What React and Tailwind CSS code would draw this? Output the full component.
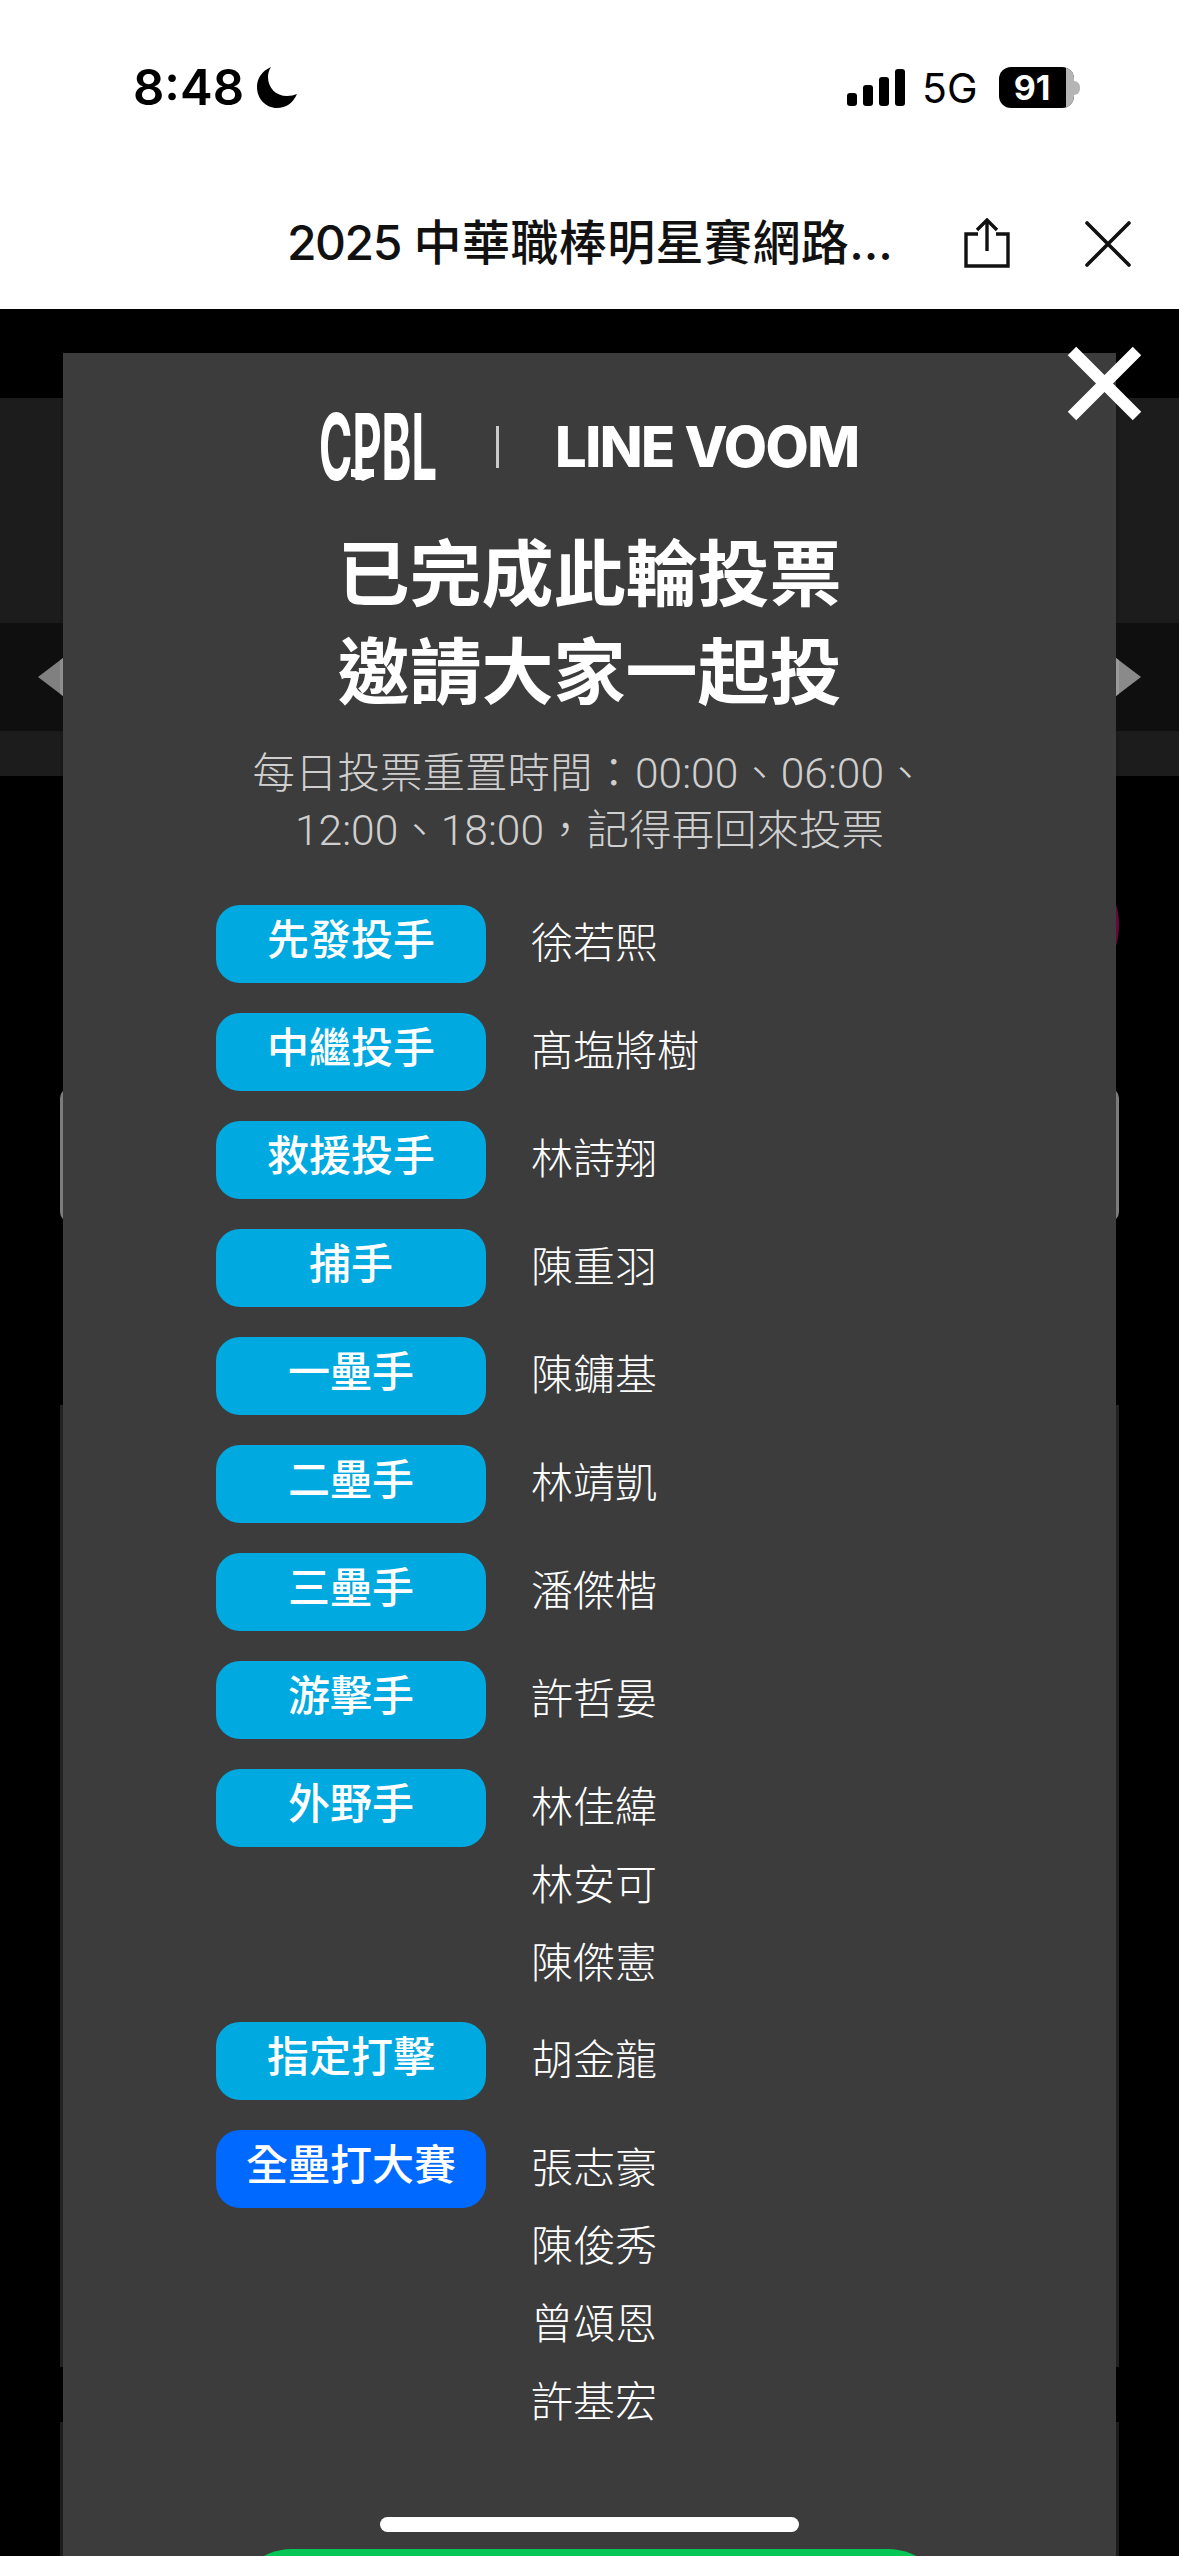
const CJK = "font-['Roboto','Noto_Sans_CJK_TC',sans-serif]";

const rows = [
  ["先發投手", ["徐若熙"]],
  ["中繼投手", ["髙塩將樹"]],
  ["救援投手", ["林詩翔"]],
  ["捕手", ["陳重羽"]],
  ["一壘手", ["陳鏞基"]],
  ["二壘手", ["林靖凱"]],
  ["三壘手", ["潘傑楷"]],
  ["游擊手", ["許哲晏"]],
  ["外野手", ["林佳緯", "林安可", "陳傑憲"]],
  ["指定打擊", ["胡金龍"]],
  ["全壘打大賽", ["張志豪", "陳俊秀", "曾頌恩", "許基宏"]],
];

function StatusBar() {
  return (
    <div className="h-[130px] flex items-start pt-[68px] pl-[133px] font-['Inter',sans-serif] text-black">
      <div className="w-[113px] text-[49px] leading-[40px] font-semibold">8:48</div>
      <svg className="ml-[11px] -mt-[1px] w-[40px] h-[41px]" viewBox="0 0 40 41">
        <path d="M14 0 C5 4 0 11 0 20 C0 32 9 41 20 41 C29 41 36 36 40 27 C37 28 34 29 30 29 C19 29 11 21 11 10 C11 6 12 3 14 0 Z" fill="#000" />
      </svg>
      <svg className="ml-[550px] mt-[1px] w-[58px] h-[37px]" viewBox="0 0 58 37">
        <rect x="0" y="24" width="10" height="13" rx="3" fill="#000" />
        <rect x="16" y="16" width="10" height="21" rx="3" fill="#000" />
        <rect x="32" y="8" width="10" height="29" rx="3" fill="#000" />
        <rect x="48" y="0" width="10" height="37" rx="3" fill="#000" />
      </svg>
      <div className="ml-[17px] text-[41px] leading-[40px] font-normal">5G</div>
      <div className="ml-[21px] -mt-[1px] flex items-center">
        <div className="w-[75px] h-[41px] rounded-[12px] bg-black flex overflow-hidden">
          <div className="w-[67px] text-center text-white text-[34px] leading-[41px] font-bold">91</div>
          <div className="w-[8px] bg-[#b5b5b5]" />
        </div>
        <div className="w-[6px] h-[14px] rounded-r-full bg-[#b5b5b5]" />
      </div>
    </div>
  );
}

function TitleBar() {
  return (
    <div className="h-[179px] flex items-start pl-[287px] text-[#111]">
      <div className="mt-[83px] w-[610px] h-[60px] text-[48px] leading-[60px] font-medium whitespace-nowrap font-['Inter','Noto_Sans_CJK_TC',sans-serif]">
        <span className="tracking-[-1.5px]">2025</span> <span className="tracking-[0.4px]">中華職棒明星賽網路</span>...
      </div>
      <svg className="ml-[67px] mt-[88px] w-[46px] h-[50px]" viewBox="0 0 46 50" fill="none" stroke="#111" strokeWidth="3.4">
        <path d="M14 16 H2 V48 H44 V16 H32" />
        <path d="M23 33 V2 M13 12 L23 2 L33 12" />
      </svg>
      <svg className="ml-[75px] mt-[91px] w-[46px] h-[46px]" viewBox="0 0 46 46" fill="none" stroke="#111" strokeWidth="3.6" strokeLinecap="round">
        <path d="M2 2 L44 44 M44 2 L2 44" />
      </svg>
    </div>
  );
}

function Arrow({ right }) {
  return right ? (
    <svg className="absolute left-[1116px] top-[35px] w-[25px] h-[38px]" viewBox="0 0 25 38">
      <polygon points="0,0 25,19 0,38" fill="#8a8a8a" />
      <polygon points="0,0 3,2.3 3,35.7 0,38" fill="#9a9a9a" />
    </svg>
  ) : (
    <svg className="absolute left-[38px] top-[35px] w-[25px] h-[38px]" viewBox="0 0 25 38">
      <polygon points="25,0 0,19 25,38" fill="#808080" />
      <polygon points="25,0 22,2.3 22,35.7 25,38" fill="#8f8f8f" />
    </svg>
  );
}

function Backdrop() {
  return (
    <div className="flex flex-col h-[2247px] bg-black overflow-hidden">
      <div className="h-[89px] shrink-0" />
      <div className="h-[225px] shrink-0 bg-[#1c1c1c]">
        <div className="mx-auto w-[1059px] h-full bg-[#191919]" />
      </div>
      <div className="relative h-[108px] shrink-0 bg-[#0f0f0f]">
        <Arrow />
        <Arrow right />
      </div>
      <div className="h-[45px] shrink-0 bg-[#1c1c1c]">
        <div className="mx-auto w-[1059px] h-full bg-[#191919]" />
      </div>
      <div className="mx-auto w-[1059px] flex flex-col flex-1">
        <div className="mt-[74px] ml-auto w-[150px] h-[150px] rounded-full bg-[#66083a]" />
        <div className="mt-[88px] h-[134px] rounded-[10px] bg-[#7c7c7c]" />
        <div className="mt-[183px] h-[962px] bg-[#222]" />
        <div className="mt-[55px] flex-1 bg-[#1c1c1c]" />
      </div>
    </div>
  );
}

function Logos() {
  return (
    <div className="h-[127px] flex items-start pl-[258px]">
      <div className="relative w-[114px] h-[66px] mt-[61px]">
        <div className="w-[114px] text-white text-[92px] leading-[66px] font-bold scale-x-[0.49] font-['Inter',sans-serif] whitespace-nowrap flex justify-center">
          CPBL
        </div>
        <div className="absolute left-[30px] top-[55px] w-[23px] h-[8px] bg-white" />
        <svg className="absolute left-[30px] top-[62px] w-[23px] h-[5px]" viewBox="0 0 23 5">
          <polygon points="0,0 23,0 12,5" fill="#fff" />
        </svg>
      </div>
      <div className="ml-[61px] mt-[73px] w-[3px] h-[42px] bg-[#c9c9c9]" />
      <div className="ml-[56px] mt-[65px] text-white text-[56px] leading-[58px] font-extrabold tracking-[-1.5px] font-['Inter',sans-serif] whitespace-nowrap">
        LINE VOOM
      </div>
    </div>
  );
}

function Row({ label, names, blue }) {
  return (
    <div className="flex items-start">
      <div
        className={`w-[270px] h-[78px] mb-[30px] rounded-[24px] text-white text-[42px] leading-[72px] font-medium text-center shrink-0 ${
          blue ? "bg-[#0069ff]" : "bg-[#00a9e0]"
        }`}
      >
        {label}
      </div>
      <div className="ml-[45px] pb-[19px] flex flex-col">
        {names.map((n) => (
          <div key={n} className="h-[78px] text-[42px] leading-[78px] font-light text-white">
            {n}
          </div>
        ))}
      </div>
    </div>
  );
}

function Modal() {
  return (
    <div className={`absolute left-[63px] top-[353px] w-[1053px] h-[2400px] bg-[#3c3c3c] ${CJK}`}>
      <Logos />
      <div className="mt-[40px] text-center text-white text-[72px] leading-[98px] font-bold font-['Noto_Sans_CJK_TC',sans-serif]">
        <div>已完成此輪投票</div>
        <div>邀請大家一起投</div>
      </div>
      <div className="mt-[29px] text-center text-[#cfcfcf] text-[42.5px] leading-[57px] font-light">
        <div>每日投票重置時間：00:00、06:00、</div>
        <div>12:00、18:00，記得再回來投票</div>
      </div>
      <div className="mt-[46px] pl-[153px] flex flex-col">
        {rows.map(([l, n], i) => (
          <Row key={l} label={l} names={n} blue={i === rows.length - 1} />
        ))}
      </div>
      <div className="mt-[88px] mx-auto w-[716px] h-[120px] rounded-[60px] bg-[#06c755]" />
    </div>
  );
}

export default function App() {
  return (
    <div className="relative w-[1179px] h-[2556px] overflow-hidden bg-black">
      <div className="bg-white">
        <StatusBar />
        <TitleBar />
      </div>
      <Backdrop />
      <Modal />
      <svg className="absolute left-[1067px] top-[346px] w-[75px] h-[75px]" viewBox="0 0 75 75" fill="none" stroke="#fff" strokeWidth="12">
        <path d="M5 5 L70 70 M70 5 L5 70" />
      </svg>
      <div className="absolute left-[380px] top-[2517px] w-[419px] h-[15px] rounded-full bg-white" />
    </div>
  );
}
